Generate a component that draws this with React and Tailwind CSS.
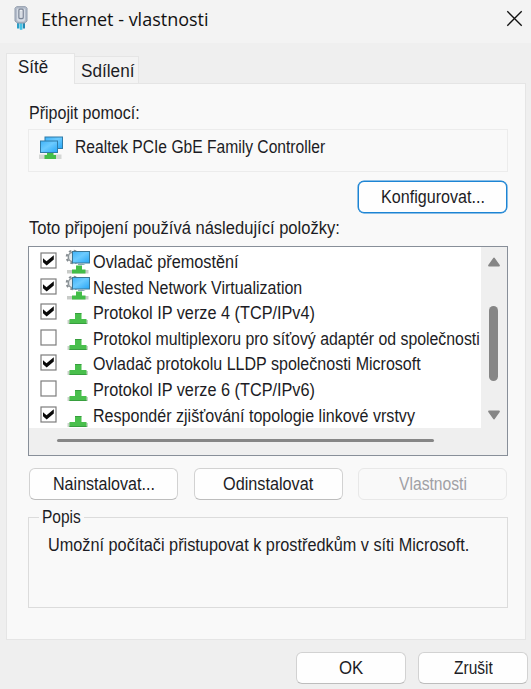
import { useLayoutEffect, useRef, useState } from "react";

// A single line of text condensed or widened to a given width.
function FitText({ width, className = "", children }) {
  const ref = useRef(null);
  const [scale, setScale] = useState(1);
  useLayoutEffect(() => {
    setScale(width / ref.current.offsetWidth);
  }, [width, children]);
  return (
    <span className={`block shrink-0 whitespace-nowrap ${className}`} style={{ width }}>
      <span ref={ref} className="inline-block origin-left" style={{ transform: `scaleX(${scale})` }}>
        {children}
      </span>
    </span>
  );
}

function PlugIcon() {
  return (
    <svg width="16" height="26" viewBox="0 0 16 26" className="mt-px shrink-0">
      <rect x="4" y="16" width="2.400" height="6.500" fill="#2a9fc9" />
      <rect x="6.800" y="16" width="2.600" height="7.800" fill="#45c3e6" />
      <rect x="9.800" y="16" width="2.200" height="6.500" fill="#2388b3" />
      <path d="M3.500 .700h9L14 2.200V15l-2.500 2h-7L2 15V2.200z" fill="#b4bdcb" stroke="#8f9aab" strokeWidth="1" />
      <path d="M4 2.700h8v11.300l-1.500 1.500h-5L4 14z" fill="#d5dbe4" />
      <rect x="5.900" y="3.200" width="4.300" height="9.300" rx="1" fill="#eef1f5" stroke="#7d8798" strokeWidth="1.300" />
      <path d="M8 5v6" stroke="#c3cad4" strokeWidth="1" />
    </svg>
  );
}

function AdapterIcon() {
  return (
    <svg width="25" height="25" viewBox="0 0 25 25" className="shrink-0">
      <defs>
        <linearGradient id="screen" x1="0" y1="0" x2="1" y2="1">
          <stop offset="0" stopColor="#3fb2f8" />
          <stop offset="0.45" stopColor="#6ccbff" />
          <stop offset="1" stopColor="#26a5f5" />
        </linearGradient>
      </defs>
      <path d="M0 18.500h22.500v4.500H0z" fill="#d5d7d5" />
      <path d="M8 16.500h6.500v2.500H17v4H5.500v-4H8z" fill="#43bd48" />
      <rect x="6" y="1" width="17.500" height="11.500" fill="url(#screen)" stroke="#2f7ba8" />
      <rect x="1.500" y="5" width="17" height="11.500" fill="url(#screen)" stroke="#2f7ba8" />
    </svg>
  );
}

function ServiceIcon() {
  return (
    <svg width="25" height="25" viewBox="0 0 25 25" className="shrink-0">
      <circle cx="8" cy="8" r="6.300" fill="none" stroke="#858c91" strokeWidth="2" strokeDasharray="2.500 2.450" />
      <circle cx="8" cy="8" r="4.700" fill="#e4e8ea" stroke="#8c9498" strokeWidth="1.500" />
      <rect x="7.500" y="2.500" width="17" height="11.500" fill="url(#screen)" stroke="#3b7695" />
      <path d="M13 14.500h4.500l3 1.500h-7.500z" fill="#87a6b5" />
      <path d="M2 21h21.500v3.500H2z" fill="#c8cbc8" />
      <path d="M11 16.500h6V20.500h3.500v4H7v-4h4z" fill="#43bd48" />
    </svg>
  );
}

function ProtocolIcon() {
  return (
    <svg width="25" height="25" viewBox="0 0 25 25" className="shrink-0">
      <path d="M2.500 20h20.500v4H2.500z" fill="#c8d2c8" />
      <path d="M10 13.500h6.500v5.500h5v5h-17v-5H10z" fill="#49bf4c" />
      <path d="M10 13.500h6.500M4.500 23.500h17" stroke="#379e3e" strokeWidth="1" />
    </svg>
  );
}

function Checkbox({ checked }) {
  return (
    <svg width="17" height="17" viewBox="0 0 17 17" className="shrink-0">
      <rect x="1" y="1" width="15" height="15" fill="#fff" stroke="#7d7d7d" strokeWidth="1.200" />
      {checked && <path d="M3 6.300 6.500 9.300 13.800 3.300V7.500L6.700 13.600 3 10.300z" fill="#0a0a0a" />}
    </svg>
  );
}

function Button({ label, width, className }) {
  return (
    <button className={`flex h-8 shrink-0 items-center justify-center rounded-[6px] border ${className}`}>
      <FitText width={width}>{label}</FitText>
    </button>
  );
}

const plain = "border-[#d2d2d2] border-b-[#bdbdbd] bg-[#fefefe]";

const items = [
  { label: "Ovladač přemostění", width: 146, checked: true, service: true },
  { label: "Nested Network Virtualization", width: 209, checked: true, service: true },
  { label: "Protokol IP verze 4 (TCP/IPv4)", width: 222, checked: true },
  { label: "Protokol multiplexoru pro síťový adaptér od společnosti", width: 387, checked: false },
  { label: "Ovladač protokolu LLDP společnosti Microsoft", width: 328, checked: true },
  { label: "Protokol IP verze 6 (TCP/IPv6)", width: 222, checked: false },
  { label: "Respondér zjišťování topologie linkové vrstvy", width: 322, checked: true },
];

export default function App() {
  return (
    <div className="flex h-[689px] w-[531px] flex-col overflow-hidden bg-[#efefef] font-['Liberation_Sans',Arial,sans-serif] text-[17.5px] leading-5 text-[#1c1c24]">
      <header className="flex h-[43px] shrink-0 items-start justify-between bg-[#f3f3f3] pt-[5px] pr-2 pl-[13px]">
        <div className="flex">
          <PlugIcon />
          <FitText width={168} className="ml-3 pt-[2px] font-['Open_Sans','Noto_Sans',sans-serif] text-[18px] leading-6 text-[#111]">
            Ethernet - vlastnosti
          </FitText>
        </div>
        <svg width="17" height="17" viewBox="0 0 17 17" className="mt-[5px]">
          <path d="M1.300 1.300 15.700 15.700M15.700 1.300 1.300 15.700" stroke="#111" strokeWidth="1.300" />
        </svg>
      </header>

      <nav className="mt-[10px] ml-[6px] flex h-[30px] shrink-0 items-end">
        <div className="z-10 -mb-px h-[31px] w-[69px] border border-b-0 border-[#e5e5e5] bg-[#f9f9f9] pt-[3px] pl-[11px]">
          <FitText width={30}>Sítě</FitText>
        </div>
        <div className="h-[27px] w-[64px] border border-b-0 border-l-0 border-[#e5e5e5] bg-[#f3f3f3] pt-[4px] pl-[6px]">
          <FitText width={53}>Sdílení</FitText>
        </div>
      </nav>

      <main className="ml-[6px] flex h-[557px] w-[520px] shrink-0 flex-col border border-[#e5e5e5] bg-[#f9f9f9] pr-[17px] pl-[21px]">
        <FitText width={111} className="mt-[19px] ml-px">Připojit pomocí:</FitText>

        <div className="mt-[6px] flex h-[43px] shrink-0 items-start border border-[#ececec] pt-[6px] pl-[10px]">
          <AdapterIcon />
          <FitText width={250} className="mt-px ml-[11px]">Realtek PCIe GbE Family Controller</FitText>
        </div>

        <div className="mt-[9px] flex justify-end pr-px">
          <Button label="Konfigurovat..." width={104} className="w-[149px] border-[1.5px] border-[#1c84d4] bg-[#fefefe] shadow-[0_0_0_0.5px_#1c84d4]" />
        </div>

        <FitText width={311} className="mt-[5px] ml-px">Toto připojení používá následující položky:</FitText>

        <section className="mt-[8px] flex h-[210px] shrink-0 flex-col border border-[#888f99] bg-[#efefef]">
          <div className="flex h-[181px] shrink-0">
            <div className="w-[452px] shrink-0 overflow-hidden bg-white pt-[2px]">
              {items.map((item) => (
                <div key={item.label} className="flex h-[25.6px] items-start pl-[11px]">
                  <div className="mt-[3px] mr-[8px]">
                    <Checkbox checked={item.checked} />
                  </div>
                  {item.service ? <ServiceIcon /> : <ProtocolIcon />}
                  <FitText width={item.width} className="mt-[3px] ml-[3px]">{item.label}</FitText>
                </div>
              ))}
            </div>
            <div className="flex flex-1 flex-col items-center pt-[10px] pr-px">
              <svg width="14" height="10" viewBox="0 0 14 10">
                <path d="M7 1.500 12 8.500H2z" fill="#868686" stroke="#868686" strokeWidth="1.800" strokeLinejoin="round" />
              </svg>
              <div className="mt-[39px] h-[75px] w-[9px] rounded-full bg-[#868686]" />
              <svg width="14" height="10" viewBox="0 0 14 10" className="mt-[29px]">
                <path d="M7 8.500 12 1.500H2z" fill="#868686" stroke="#868686" strokeWidth="1.800" strokeLinejoin="round" />
              </svg>
            </div>
          </div>
          <div className="mt-[11px] ml-[28px] h-[3px] w-[377px] rounded-full bg-[#868686]" />
        </section>

        <div className="mt-[12px] flex shrink-0 justify-between pr-px pl-px">
          <Button label="Nainstalovat..." width={102} className={`w-[149px] ${plain}`} />
          <Button label="Odinstalovat" width={90} className={`w-[149px] ${plain}`} />
          <Button label="Vlastnosti" width={68} className="w-[149px] border-[#e8e8e8] bg-[#f9f9f9] text-[#a0a0a5]" />
        </div>

        <fieldset className="mt-[7px] h-[101px] shrink-0 border border-[#dcdcdc] pl-[10px]">
          <legend className="px-[3px]">
            <FitText width={39}>Popis</FitText>
          </legend>
          <FitText width={421} className="mt-[8px] ml-[9px]">Umožní počítači přistupovat k prostředkům v síti Microsoft.</FitText>
        </fieldset>
      </main>

      <footer className="mt-[12px] flex shrink-0 justify-end gap-[12px] pr-[3px]">
        <Button label="OK" width={24} className={`w-[110px] ${plain}`} />
        <Button label="Zrušit" width={39} className={`w-[110px] ${plain}`} />
      </footer>
    </div>
  );
}
